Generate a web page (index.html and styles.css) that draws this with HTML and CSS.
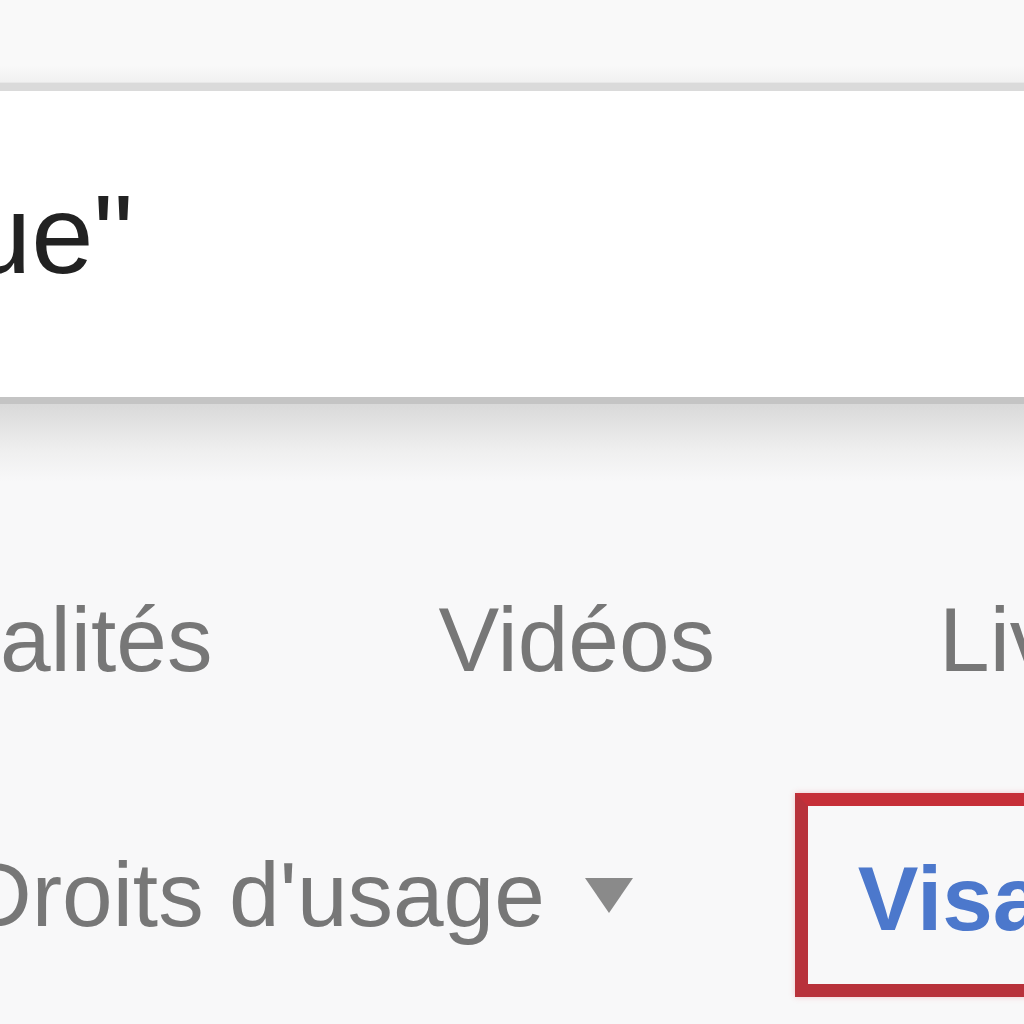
FILE: index.html
```html
<!DOCTYPE html>
<html lang="fr">
<head>
<meta charset="utf-8">
<title>Recherche d'images</title>
<link rel="stylesheet" href="styles.css">
</head>
<body>
<div class="page">
  <header class="topbar"></header>
  <div class="searchbox">
    <div class="query">ue"</div>
  </div>
  <div class="box-shadow"></div>
  <nav class="tabs">
    <span class="tab tab-first">alités</span>
    <span class="tab tab-mid">Vidéos</span>
    <span class="tab tab-last">Livres</span>
  </nav>
  <div class="tools">
    <span class="tool tool-rights">Droits d'usage<span class="caret"></span></span>
    <span class="tool-selected">Visages</span>
  </div>
</div>
</body>
</html>
```
FILE: styles.css
```css
html, body {
  margin: 0;
  padding: 0;
  background: #f8f8f9;
  overflow: hidden;
}
.page {
  width: 1024px;
  height: 1024px;
  overflow: hidden;
  font-family: "Liberation Sans", Arial, sans-serif;
}
.topbar {
  height: 82px;
  background: linear-gradient(#f9f9f9 0%, #f9f9f9 80%, #f1f1f1 100%);
  border-bottom: 1px solid #e8e8e8;
}
.searchbox {
  height: 306px;
  background: #ffffff;
  border-top: 8px solid #dadada;
  border-bottom: 7px solid #c4c4c4;
  overflow: hidden;
}
.query {
  margin-left: -31px;
  padding-top: 79px;
  font-size: 112px;
  line-height: 130px;
  color: #222222;
  white-space: nowrap;
}
.box-shadow {
  height: 78px;
  background: linear-gradient(#d9d9d9 0%, #e4e4e4 30%, #efefef 60%, #f8f8f9 100%);
}
.tabs {
  display: flex;
  white-space: nowrap;
  margin-top: 106px;
  font-size: 91px;
  line-height: 104px;
  color: #777777;
}
.tab-first {
  margin-left: 0;
}
.tab-mid {
  margin-left: 226px;
}
.tab-last {
  margin-left: 224px;
}
.tools {
  display: flex;
  align-items: center;
  white-space: nowrap;
  margin-top: 101px;
  font-size: 91px;
  line-height: 104px;
}
.tool-rights {
  color: #777777;
  margin-left: -34px;
}
.caret {
  display: inline-block;
  vertical-align: middle;
  width: 0;
  height: 0;
  margin-left: 40px;
  margin-bottom: 12px;
  border-left: 24px solid transparent;
  border-right: 24px solid transparent;
  border-top: 35px solid #8a8a8a;
}
.tool-selected {
  margin-left: 162px;
  padding: 41px 300px 33px 50px;
  border: 13px solid #b8323b;
  border-top-color: #c62f38;
  box-shadow: 0 0 6px rgba(230, 60, 70, 0.25);
  color: #4c78cc;
  font-weight: bold;
}
```
